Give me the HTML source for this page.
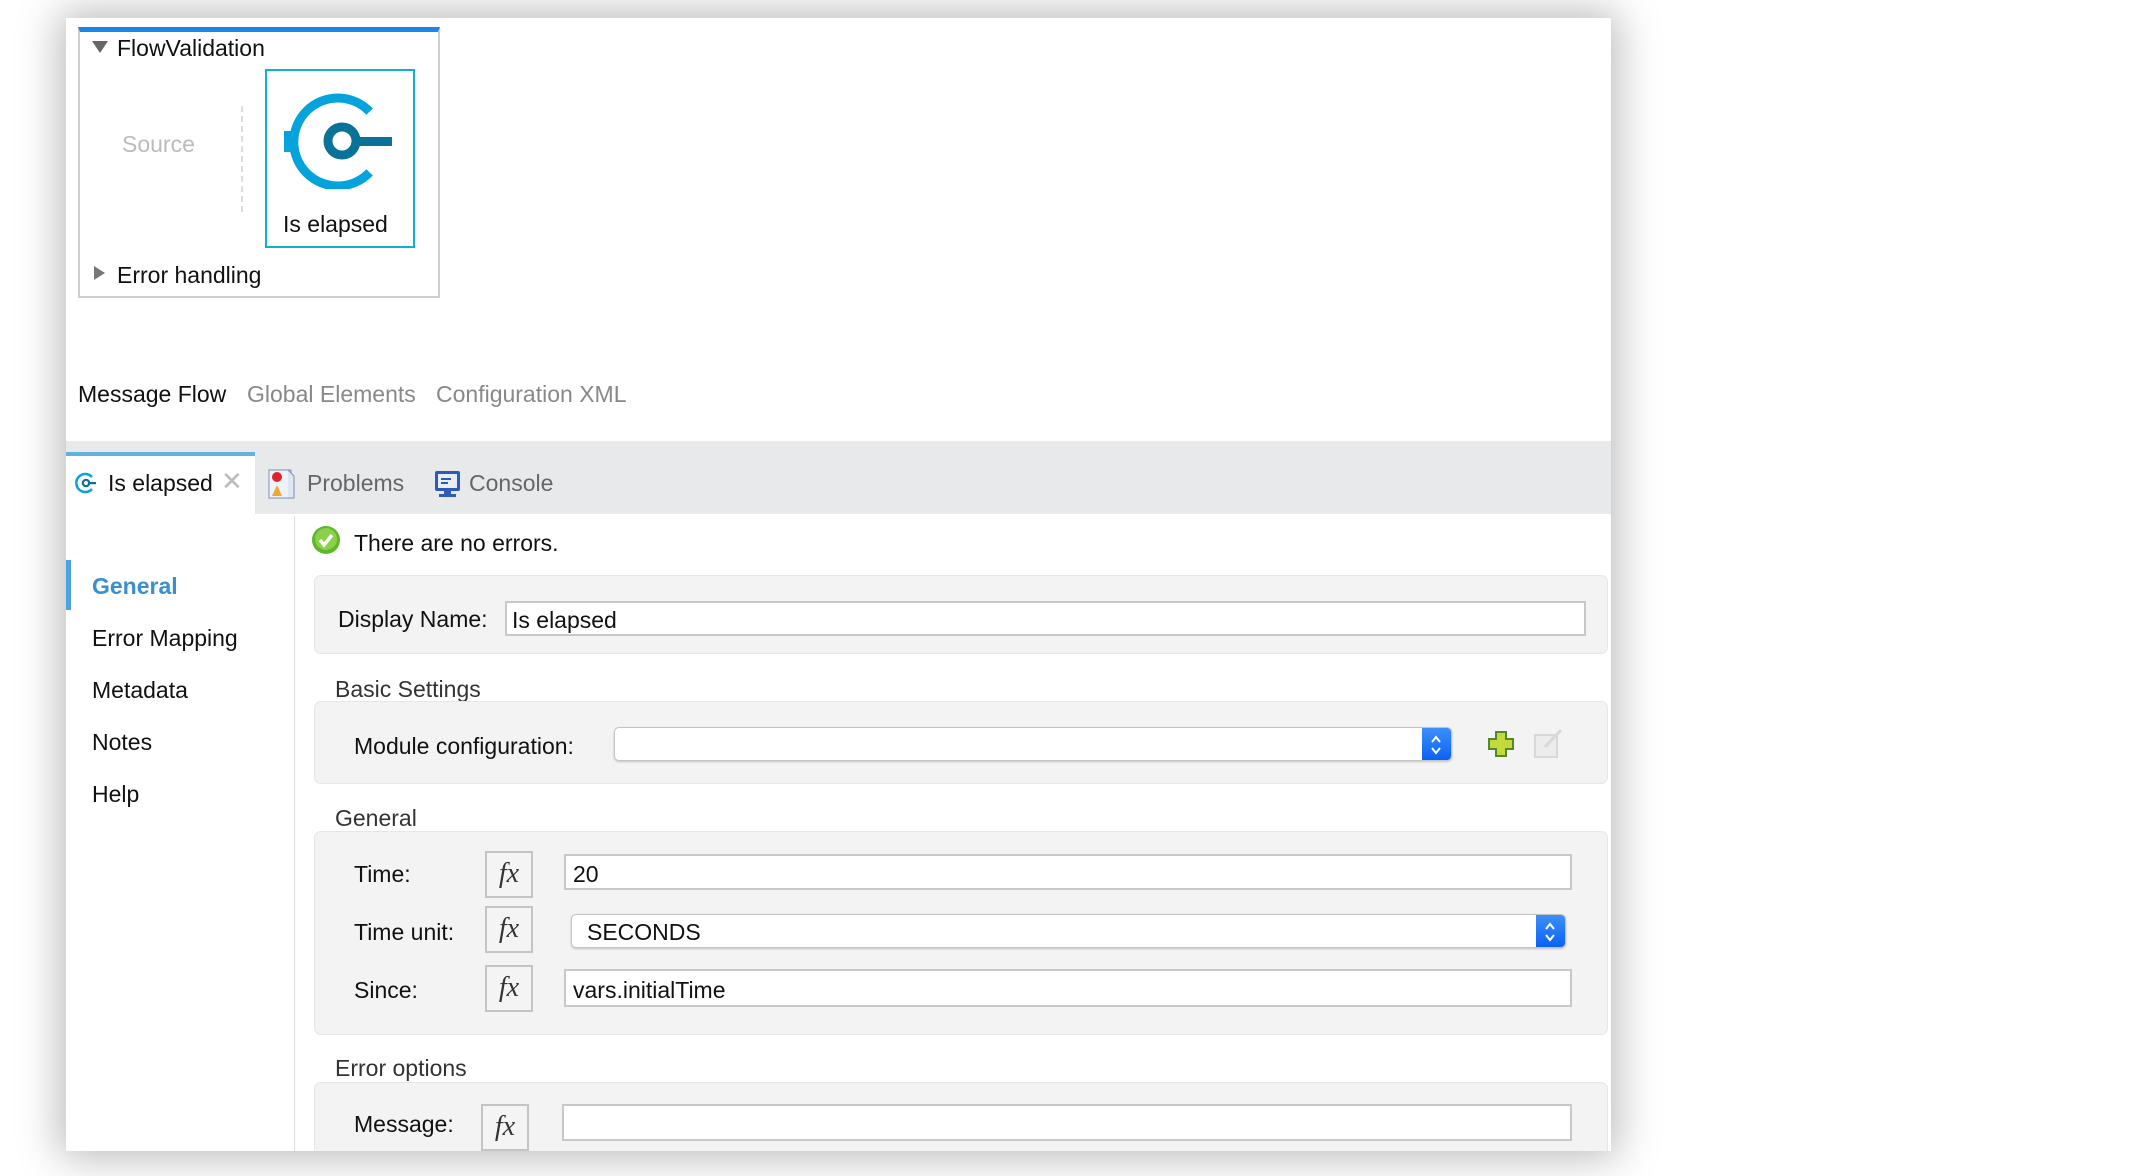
<!DOCTYPE html>
<html><head><meta charset="utf-8"><style>
*{margin:0;padding:0;box-sizing:border-box}
body{width:2142px;height:1176px;background:#fff;position:relative;overflow:hidden;font-family:"Liberation Sans",Helvetica,sans-serif;color:#111}
.a{position:absolute}
.win{left:66px;top:18px;width:1545px;height:1133px;background:#fff;box-shadow:0 0 40px 6px rgba(0,0,0,.28);overflow:hidden}
.t{position:absolute;font-size:23px;line-height:26px;white-space:nowrap}
.panel{position:absolute;background:#f3f3f3;border:1px solid #e6e6e6;border-radius:7px}
.inp{position:absolute;background:#fff;border:2px solid #c8c8c8}
.fx{position:absolute;width:48px;height:47px;border:2px solid #c4c4c4;background:#f4f4f4;font-family:"Liberation Serif",serif;font-style:italic;font-size:28px;text-align:center;line-height:42px;color:#333}
.combo{position:absolute;background:#fff;border:1px solid #c4c4c4;border-radius:5px;box-shadow:0 1px 2px rgba(0,0,0,.2);overflow:hidden}
.combo .b{position:absolute;right:0;top:0;bottom:0;width:29px;background:linear-gradient(#3d8ff8,#0a62f5)}
.combo .b svg{position:absolute;left:7px;top:6px}
</style></head><body>
<div class="a win">
  <div class="a" style="left:12px;top:9px;width:362px;height:271px;border:2px solid #cfcfcf;border-top:5px solid #1a86e6"></div>
  <div class="a" style="left:26px;top:23px;width:0;height:0;border-left:8px solid transparent;border-right:8px solid transparent;border-top:12px solid #666"></div>
  <div class="t" style="left:51px;top:17px">FlowValidation</div>
  <div class="t" style="left:56px;top:113px;color:#bbb">Source</div>
  <div class="a" style="left:175px;top:88px;height:106px;border-left:2px dashed #ddd"></div>
  <div class="a" style="left:199px;top:51px;width:150px;height:179px;border:2px solid #0fb0d0"></div>
  <svg class="a" style="left:199px;top:51px" width="150" height="120" viewBox="0 0 150 120">
    <path d="M104.6 42.6 A44 44 0 1 0 104.6 103.4" fill="none" stroke="#05a3dc" stroke-width="9"/>
    <rect x="19" y="62" width="10" height="21" fill="#05a3dc"/>
    <circle cx="77" cy="72" r="14" fill="none" stroke="#0a7199" stroke-width="9"/>
    <rect x="88" y="68" width="39" height="9" fill="#0a7199"/>
  </svg>
  <div class="t" style="left:217px;top:193px;font-size:23px">Is elapsed</div>
  <div class="a" style="left:28px;top:248px;width:0;height:0;border-top:7px solid transparent;border-bottom:7px solid transparent;border-left:11px solid #777"></div>
  <div class="t" style="left:51px;top:244px">Error handling</div>

  <div class="t" style="left:12px;top:363px">Message Flow</div>
  <div class="t" style="left:181px;top:363px;color:#888">Global Elements</div>
  <div class="t" style="left:370px;top:363px;color:#888">Configuration XML</div>

  <div class="a" style="left:0;top:423px;width:1545px;height:73px;background:#e8e9eb"></div>
  <div class="a" style="left:0;top:434px;width:189px;height:62px;background:#fff;border-top:4px solid #62b2e0"></div>
  <svg class="a" style="left:7px;top:452px" width="26" height="26" viewBox="0 0 26 26"><path d="M19 7 A9 9 0 1 0 19 19" fill="none" stroke="#05a3dc" stroke-width="2.5"/><circle cx="13" cy="13" r="3.2" fill="none" stroke="#0a7199" stroke-width="2.2"/><rect x="16" y="12" width="7" height="2.2" fill="#0a7199"/></svg>
  <div class="t" style="left:42px;top:452px">Is elapsed</div>
  <div class="t" style="left:155px;top:450px;color:#bbb;font-size:26px">✕</div>
  <svg class="a" style="left:202px;top:451px" width="28" height="30" viewBox="0 0 28 30"><rect x="1" y="1" width="22" height="28" fill="#eef3fa" stroke="#7d90b0"/><path d="M20 1 l6 6 v22 h-6" fill="#dde6f2" stroke="#7d90b0"/><circle cx="9" cy="8" r="5" fill="#e2222a"/><path d="M4 27 l5-11 l5 11z" fill="#f0a830"/></svg>
  <div class="t" style="left:241px;top:452px;color:#666">Problems</div>
  <svg class="a" style="left:368px;top:452px" width="27" height="28" viewBox="0 0 27 28"><rect x="1" y="1" width="25" height="20" rx="2" fill="#2c5bb8"/><rect x="4" y="4" width="19" height="14" fill="#e8eefa"/><rect x="7" y="8" width="10" height="2" fill="#2c5bb8"/><rect x="7" y="12" width="7" height="2" fill="#2c5bb8"/><rect x="10" y="21" width="7" height="3" fill="#2c5bb8"/><rect x="5" y="24" width="17" height="3" fill="#2c5bb8"/></svg>
  <div class="t" style="left:403px;top:452px;color:#666">Console</div>

  <div class="a" style="left:228px;top:498px;height:640px;border-left:1px solid #ddd"></div>
  <div class="a" style="left:0;top:542px;width:5px;height:50px;background:#4aa3df"></div>
  <div class="t" style="left:26px;top:555px;color:#3a8fd0;font-weight:bold">General</div>
  <div class="t" style="left:26px;top:607px">Error Mapping</div>
  <div class="t" style="left:26px;top:659px">Metadata</div>
  <div class="t" style="left:26px;top:711px">Notes</div>
  <div class="t" style="left:26px;top:763px">Help</div>

  <svg class="a" style="left:245px;top:507px" width="30" height="30" viewBox="0 0 30 30"><circle cx="15" cy="15" r="14" fill="#5cb82a"/><circle cx="15" cy="14" r="11" fill="#8ad04a"/><path d="M9 15 l4 5 l8-10" fill="none" stroke="#fff" stroke-width="3.5"/></svg>
  <div class="t" style="left:288px;top:512px">There are no errors.</div>

  <div class="panel" style="left:248px;top:557px;width:1294px;height:79px"></div>
  <div class="t" style="left:272px;top:588px">Display Name:</div>
  <div class="inp" style="left:439px;top:583px;width:1081px;height:35px"></div>
  <div class="t" style="left:446px;top:589px">Is elapsed</div>

  <div class="t" style="left:269px;top:658px;color:#333">Basic Settings</div>
  <div class="panel" style="left:248px;top:683px;width:1294px;height:83px"></div>
  <div class="t" style="left:288px;top:715px">Module configuration:</div>
  <div class="combo" style="left:548px;top:709px;width:838px;height:34px"><div class="b"><svg width="14" height="22" viewBox="0 0 14 22"><path d="M3 8 L7 3 L11 8 M3 14 L7 19 L11 14" fill="none" stroke="#fff" stroke-width="2"/></svg></div></div>
  <svg class="a" style="left:1421px;top:712px" width="28" height="28" viewBox="0 0 28 28"><path d="M9 2h10v7h7v10h-7v7h-10v-7h-7v-10h7z" fill="#c4da3c" stroke="#4f8a2c" stroke-width="2"/></svg>
  <svg class="a" style="left:1467px;top:709px" width="32" height="32" viewBox="0 0 32 32"><rect x="2" y="8" width="22" height="22" fill="#ececec" stroke="#d8d8d8" stroke-width="2"/><path d="M12 20 L28 3" stroke="#d8d8d8" stroke-width="3"/></svg>

  <div class="t" style="left:269px;top:787px;color:#333">General</div>
  <div class="panel" style="left:248px;top:813px;width:1294px;height:204px"></div>
  <div class="t" style="left:288px;top:843px">Time:</div>
  <div class="fx" style="left:419px;top:833px">fx</div>
  <div class="inp" style="left:498px;top:836px;width:1008px;height:36px"></div>
  <div class="t" style="left:507px;top:843px">20</div>
  <div class="t" style="left:288px;top:901px">Time unit:</div>
  <div class="fx" style="left:419px;top:888px">fx</div>
  <div class="combo" style="left:505px;top:896px;width:995px;height:34px"><div class="b"><svg width="14" height="22" viewBox="0 0 14 22"><path d="M3 8 L7 3 L11 8 M3 14 L7 19 L11 14" fill="none" stroke="#fff" stroke-width="2"/></svg></div></div>
  <div class="t" style="left:521px;top:901px">SECONDS</div>
  <div class="t" style="left:288px;top:959px">Since:</div>
  <div class="fx" style="left:419px;top:947px">fx</div>
  <div class="inp" style="left:498px;top:951px;width:1008px;height:38px"></div>
  <div class="t" style="left:507px;top:959px">vars.initialTime</div>

  <div class="t" style="left:269px;top:1037px;color:#333">Error options</div>
  <div class="panel" style="left:248px;top:1064px;width:1294px;height:84px"></div>
  <div class="t" style="left:288px;top:1093px">Message:</div>
  <div class="fx" style="left:415px;top:1086px">fx</div>
  <div class="inp" style="left:496px;top:1086px;width:1010px;height:37px"></div>
</div>
</body></html>
